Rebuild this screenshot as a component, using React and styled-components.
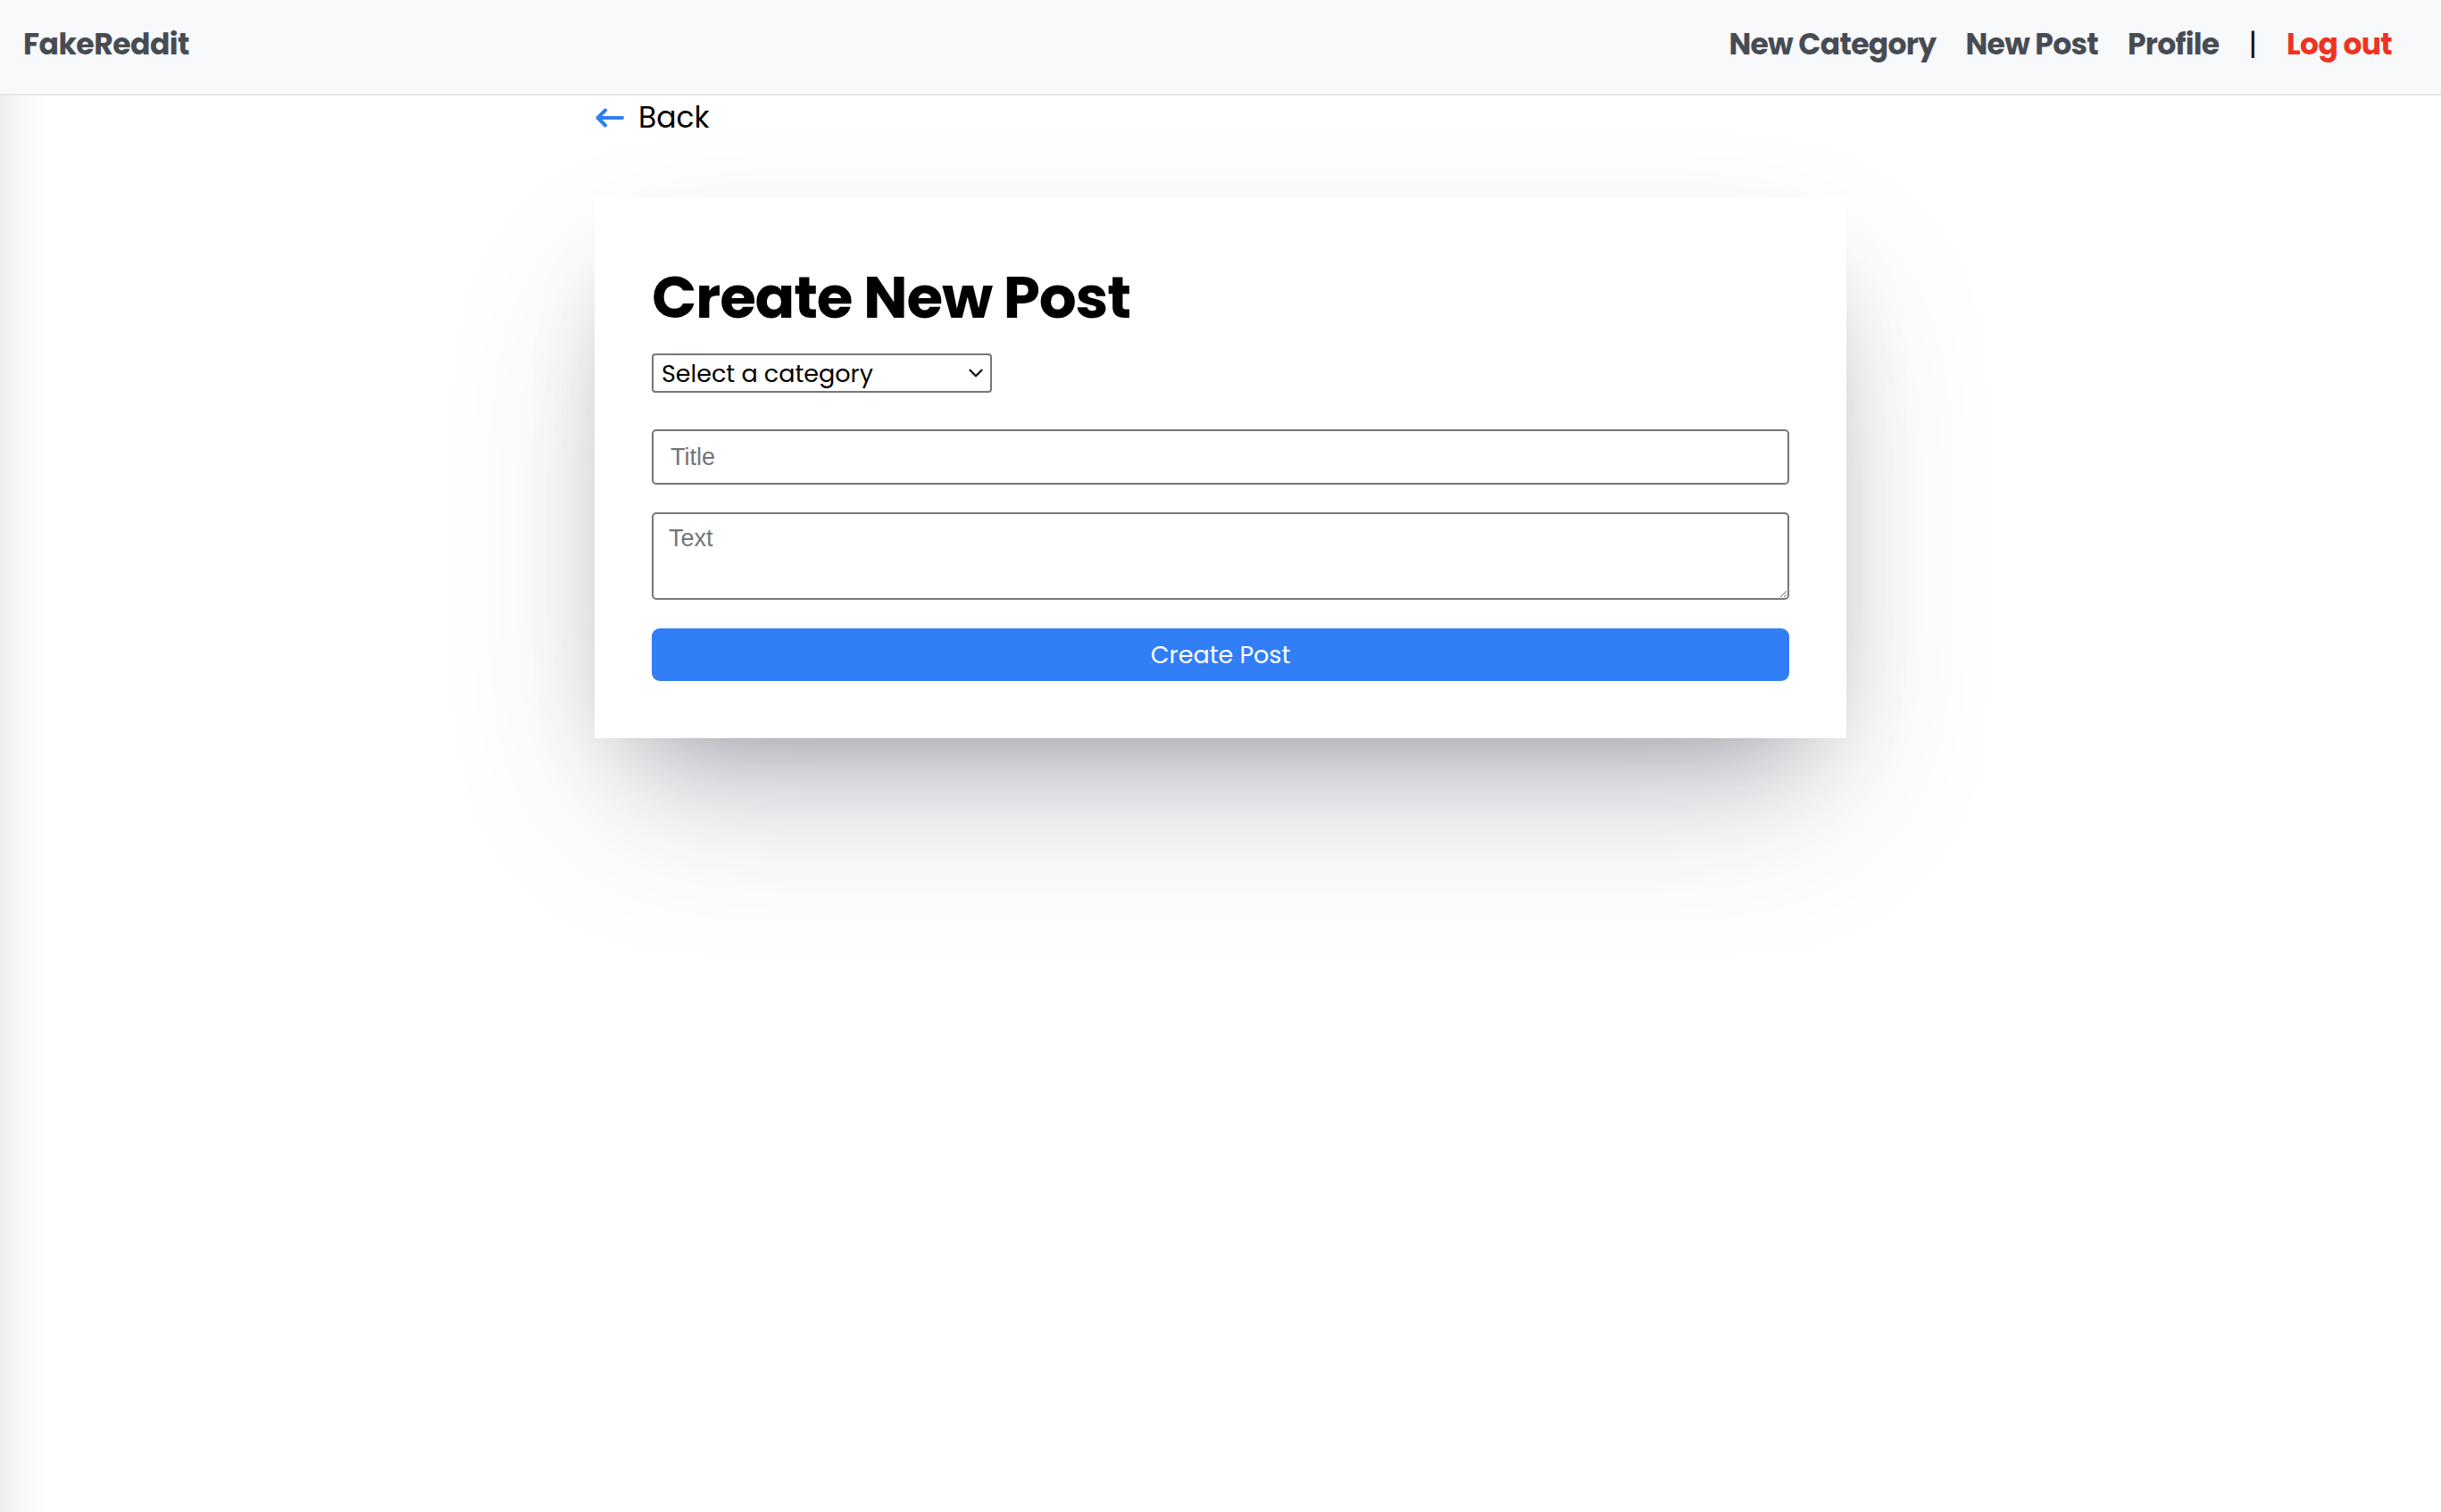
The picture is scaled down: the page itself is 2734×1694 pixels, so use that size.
import React, { useState } from "react";
import styled, { createGlobalStyle } from "styled-components";
import { ChevronDown } from "lucide-react";

const GlobalStyle = createGlobalStyle`
  * {
    box-sizing: border-box;
  }
  body {
    margin: 0;
    min-height: 100vh;
    font-family: Poppins, "Open Sans", sans-serif;
    background: linear-gradient(to right, #ededed 0, #f8f8f8 24px, #ffffff 52px);
  }
`;

export default function App() {
  const [category, setCategory] = useState("");
  const [title, setTitle] = useState("");
  const [text, setText] = useState("");

  return (
    <>
      <GlobalStyle />
      <Navbar>
        <Brand href="#">FakeReddit</Brand>
        <NavLinks>
          <NavLink href="#">New Category</NavLink>
          <NavLink href="#">New Post</NavLink>
          <NavLink href="#">Profile</NavLink>
          <Divider>|</Divider>
          <NavLink href="#" $danger>
            Log out
          </NavLink>
        </NavLinks>
      </Navbar>
      <Main>
        <BackLink href="#">
          <svg width="34" height="24" viewBox="0 0 34 24" fill="none">
            <path
              d="M31 12H4M12 3.5L3.5 12L12 20.5"
              stroke="#2f7ff0"
              strokeWidth="4"
              strokeLinecap="round"
              strokeLinejoin="round"
            />
          </svg>
          Back
        </BackLink>
        <Card>
          <Heading>Create New Post</Heading>
          <SelectWrap>
            <Select value={category} onChange={(e) => setCategory(e.target.value)}>
              <option value="">Select a category</option>
            </Select>
            <SelectIcon>
              <ChevronDown size={26} strokeWidth={2.2} />
            </SelectIcon>
          </SelectWrap>
          <TitleInput
            placeholder="Title"
            value={title}
            onChange={(e) => setTitle(e.target.value)}
          />
          <TextArea
            placeholder="Text"
            value={text}
            onChange={(e) => setText(e.target.value)}
          />
          <SubmitButton>Create Post</SubmitButton>
        </Card>
      </Main>
    </>
  );
}

const Navbar = styled.nav`
  height: 107px;
  background-color: #f8f9fa;
  border-bottom: 2px solid #e7e7ec;
  display: flex;
  align-items: center;
  justify-content: space-between;
  padding: 0 55px 6px 26px;
`;

const Brand = styled.a`
  font-size: 33px;
  font-weight: 700;
  color: #474c54;
  text-decoration: none;
  letter-spacing: -0.5px;
`;

const NavLinks = styled.div`
  display: flex;
  align-items: center;
  gap: 33px;
`;

const NavLink = styled.a`
  font-size: 33px;
  font-weight: 700;
  letter-spacing: -0.7px;
  color: ${(p) => (p.$danger ? "#ee3322" : "#474c54")};
  text-decoration: none;
`;

const Divider = styled.span`
  font-size: 33px;
  color: #111111;
`;

const Main = styled.main`
  width: 1402px;
  margin: 0 auto;
`;

const BackLink = styled.a`
  display: inline-flex;
  align-items: center;
  gap: 15px;
  height: 50px;
  font-size: 33px;
  color: #000000;
  text-decoration: none;
  margin-bottom: 64px;
`;

const Card = styled.div`
  background-color: #ffffff;
  padding: 70px 64px 64px 64px;
  display: flex;
  flex-direction: column;
  box-shadow: 0 87px 175px -35px rgba(50, 50, 93, 0.25),
    0 52px 105px -52px rgba(0, 0, 0, 0.3);
`;

const Heading = styled.h1`
  margin: 0 0 21px;
  font-size: 66px;
  line-height: 84px;
  font-weight: 700;
  letter-spacing: -1.2px;
  color: #000000;
`;

const SelectWrap = styled.div`
  position: relative;
  width: 381px;
  height: 44px;
  margin-bottom: 41px;
`;

const Select = styled.select`
  appearance: none;
  width: 100%;
  height: 100%;
  border: 2px solid #767676;
  border-radius: 4px;
  background: #ffffff;
  padding: 0 40px 0 9px;
  font-family: Poppins, "Open Sans", sans-serif;
  font-size: 27px;
  color: #000000;
`;

const SelectIcon = styled.span`
  position: absolute;
  right: 5px;
  top: 9px;
  display: flex;
  color: #111111;
  pointer-events: none;
`;

const fieldStyles = `
  width: 100%;
  border: 2px solid #767676;
  border-radius: 5px;
  font-family: "Liberation Sans", Arial, sans-serif;
  font-size: 27px;
  color: #222222;
  outline: none;
  &::placeholder {
    color: #757575;
  }
`;

const TitleInput = styled.input`
  ${fieldStyles}
  height: 62px;
  padding: 0 19px;
  margin-bottom: 31px;
`;

const TextArea = styled.textarea`
  ${fieldStyles}
  height: 98px;
  padding: 12px 17px;
  margin-bottom: 32px;
  resize: vertical;
`;

const SubmitButton = styled.button`
  height: 59px;
  width: 100%;
  border: none;
  border-radius: 9px;
  background-color: #317ef6;
  color: #ffffff;
  font-family: Poppins, "Open Sans", sans-serif;
  font-size: 27px;
  cursor: pointer;
`;
